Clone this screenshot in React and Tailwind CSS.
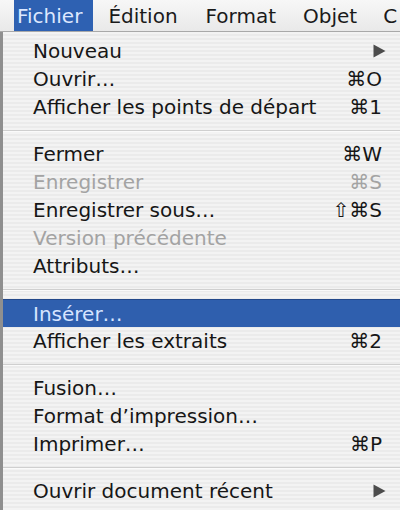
import React from "react";

const items = [
  { label: "Nouveau", submenu: true },
  { label: "Ouvrir…", key: "⌘O" },
  { label: "Afficher les points de départ", key: "⌘1" },
  { sep: true },
  { label: "Fermer", key: "⌘W" },
  { label: "Enregistrer", key: "⌘S", disabled: true },
  { label: "Enregistrer sous…", key: "⇧⌘S" },
  { label: "Version précédente", disabled: true },
  { label: "Attributs…" },
  { sep: true },
  { label: "Insérer…", active: true },
  { label: "Afficher les extraits", key: "⌘2" },
  { sep: true },
  { label: "Fusion…" },
  { label: "Format d’impression…" },
  { label: "Imprimer…", key: "⌘P" },
  { sep: true },
  { label: "Ouvrir document récent", submenu: true },
];

const Arrow = () => (
  <svg width="13" height="14" viewBox="0 0 13 14" className="mr-[14px] shrink-0">
    <path d="M0.5 0.5 L12.5 7 L0.5 13.5 Z" fill="#4c4c4c" />
  </svg>
);

const MenuRow = ({ item }) => {
  if (item.sep) {
    return (
      <div className="h-[19px] flex flex-col justify-center">
        <div className="h-px bg-[#cfcfcf]" />
        <div className="h-px bg-[#fafafa]" />
      </div>
    );
  }
  const color = item.active
    ? "text-[#d6e4ff]"
    : item.disabled
    ? "text-[#a3a3a3]"
    : "text-[#161616]";
  return (
    <div
      className={`h-[28px] flex items-center justify-between pl-[30px] ${color} ${
        item.active ? "bg-[#2f5fae] border-t border-[#23488a]" : ""
      }`}
    >
      <span>{item.label}</span>
      {item.submenu ? (
        <Arrow />
      ) : item.key ? (
        <span className="pr-[18px]">{item.key}</span>
      ) : null}
    </div>
  );
};

export default function App() {
  return (
    <div className="w-[400px] h-[510px] overflow-hidden bg-[#ededed] font-['DejaVu_Sans',sans-serif] text-[20px] leading-none">
      {/* Menu bar */}
      <div className="h-[32px] flex items-stretch pl-[14px] bg-[linear-gradient(180deg,#f7f7f7,#e9e9e9)] border-b border-[#a9a9a9] text-[#1a1a1a] whitespace-nowrap">
        <span className="flex items-center pl-[3px] pr-[11px] bg-[#2e61b2] text-[#dde8ff]">Fichier</span>
        <span className="flex items-center ml-[15px]">Édition</span>
        <span className="flex items-center ml-[28px]">Format</span>
        <span className="flex items-center ml-[27px]">Objet</span>
        <span className="flex items-center ml-[26px]">C</span>
      </div>

      {/* Dropdown */}
      <div className="h-[478px] border-l-[3px] border-[#8f8f8f] pt-[5px] bg-[repeating-linear-gradient(180deg,#f3f3f3_0px,#f3f3f3_2px,#ebebeb_2px,#ebebeb_4px)] whitespace-nowrap">
        {items.map((item, i) => (
          <MenuRow key={i} item={item} />
        ))}
      </div>
    </div>
  );
}
